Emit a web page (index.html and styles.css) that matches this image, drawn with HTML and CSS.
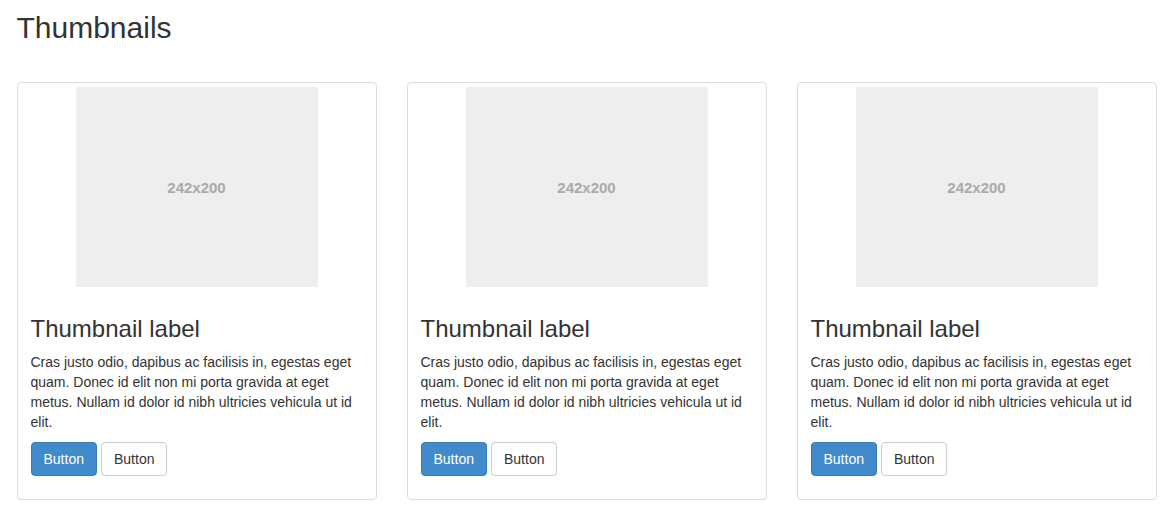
FILE: index.html
```html
<!DOCTYPE html>
<html lang="en">
<head>
<meta charset="utf-8">
<title>Thumbnails</title>
<link rel="stylesheet" href="styles.css">
</head>
<body>
<div class="container">
  <h2 class="page-title">Thumbnails</h2>
  <div class="row">
    <div class="thumbnail">
      <div class="placeholder">242x200</div>
      <div class="caption">
        <h3>Thumbnail label</h3>
        <p>Cras justo odio, dapibus ac facilisis in, egestas eget quam. Donec id elit non mi porta gravida at eget metus. Nullam id dolor id nibh ultricies vehicula ut id elit.</p>
        <p class="actions"><a href="#" class="btn btn-primary">Button</a><a href="#" class="btn btn-default">Button</a></p>
      </div>
    </div>
    <div class="thumbnail">
      <div class="placeholder">242x200</div>
      <div class="caption">
        <h3>Thumbnail label</h3>
        <p>Cras justo odio, dapibus ac facilisis in, egestas eget quam. Donec id elit non mi porta gravida at eget metus. Nullam id dolor id nibh ultricies vehicula ut id elit.</p>
        <p class="actions"><a href="#" class="btn btn-primary">Button</a><a href="#" class="btn btn-default">Button</a></p>
      </div>
    </div>
    <div class="thumbnail">
      <div class="placeholder">242x200</div>
      <div class="caption">
        <h3>Thumbnail label</h3>
        <p>Cras justo odio, dapibus ac facilisis in, egestas eget quam. Donec id elit non mi porta gravida at eget metus. Nullam id dolor id nibh ultricies vehicula ut id elit.</p>
        <p class="actions"><a href="#" class="btn btn-primary">Button</a><a href="#" class="btn btn-default">Button</a></p>
      </div>
    </div>
  </div>
</div>
</body>
</html>
```
FILE: styles.css
```css
* { box-sizing: border-box; }
html, body { margin: 0; padding: 0; }
body {
  font-family: "Liberation Sans", Helvetica, Arial, sans-serif;
  font-size: 14px;
  line-height: 20px;
  color: #333;
  background: #fff;
  overflow: hidden;
}
.container {
  width: 1140px;
  margin: 0 auto;
}
.page-title {
  font-size: 30px;
  font-weight: 500;
  line-height: 33px;
  margin: 11px 0 38px;
}
.row {
  display: grid;
  grid-template-columns: repeat(3, 1fr);
  gap: 30px;
}
.thumbnail {
  border: 1px solid #ddd;
  border-radius: 4px;
  padding: 4px;
  background: #fff;
}
.placeholder {
  width: 242px;
  height: 200px;
  margin: 0 auto;
  padding-top: 2px;
  background: #eee;
  color: #aaa;
  font-weight: bold;
  font-size: 15px;
  display: flex;
  align-items: center;
  justify-content: center;
}
.caption {
  padding: 9px;
}
.caption h3 {
  font-size: 24px;
  font-weight: 500;
  line-height: 26.4px;
  margin: 20px 0 10px;
}
.caption p {
  margin: 0 0 10px;
}
.actions {
  display: flex;
  gap: 4px;
}
.btn {
  display: inline-block;
  padding: 6px 12px;
  font-size: 14px;
  line-height: 20px;
  border: 1px solid transparent;
  border-radius: 4px;
  text-decoration: none;
}
.btn-primary {
  background: #428bca;
  border-color: #357ebd;
  color: #fff;
}
.btn-default {
  background: #fff;
  border-color: #ccc;
  color: #333;
}
```
